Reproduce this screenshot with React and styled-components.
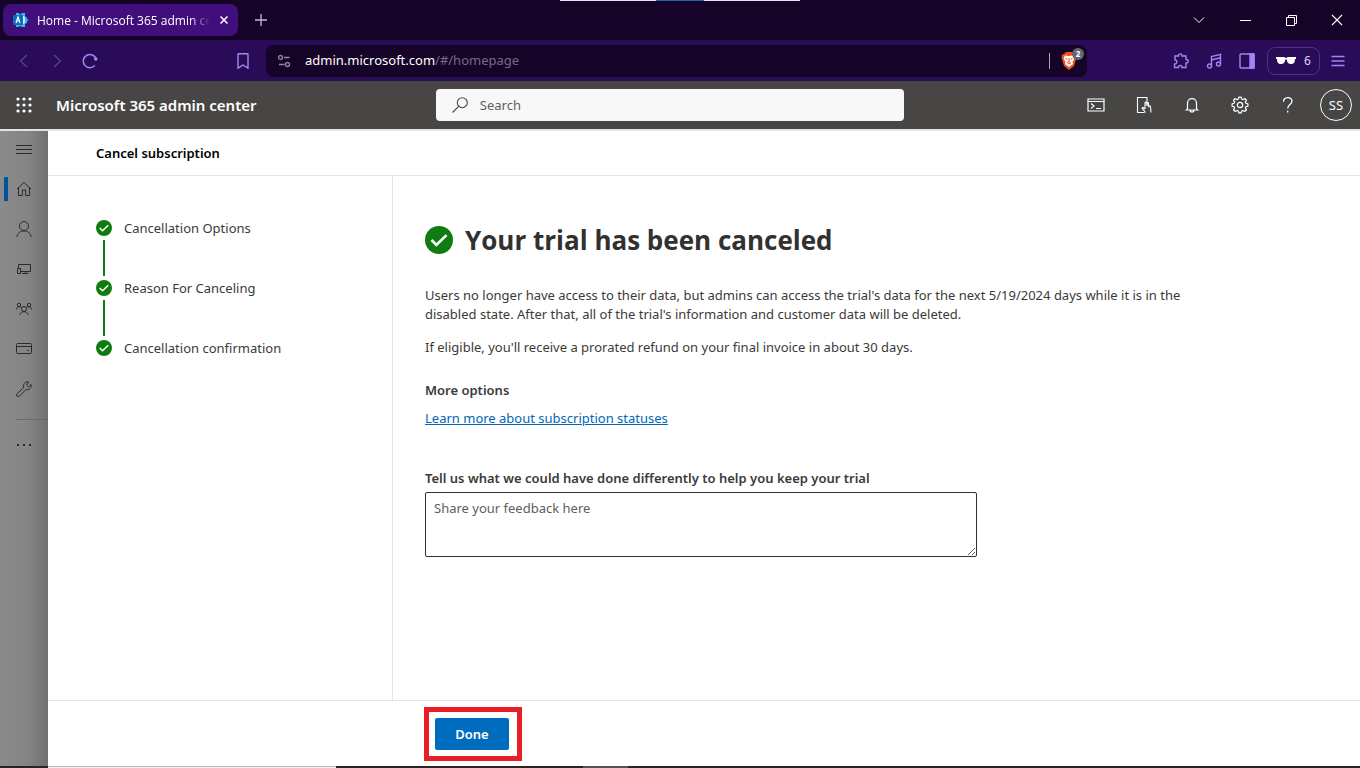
import React from "react";
import styled, { createGlobalStyle } from "styled-components";

const steps = [
  "Cancellation Options",
  "Reason For Canceling",
  "Cancellation confirmation",
];

// eight teeth, four points each, around the centre of a 18px box
const gearPoints = Array.from({ length: 32 }, (_, i) => {
  const tooth = Math.floor(i / 4) * 45;
  const angle = ((tooth + [-15, -9, 9, 15][i % 4]) * Math.PI) / 180;
  const radius = [6.2, 8, 8, 6.2][i % 4];
  return `${9 + radius * Math.sin(angle)},${9 - radius * Math.cos(angle)}`;
}).join(" ");

function Icon({ size = 16, box = 16, stroke = 1, children }) {
  return (
    <svg
      width={size}
      height={size}
      viewBox={`0 0 ${box} ${box}`}
      fill="none"
      stroke="currentColor"
      strokeWidth={stroke}
      aria-hidden="true"
    >
      {children}
    </svg>
  );
}

function Check({ size }) {
  return (
    <svg width={size} height={size} viewBox="0 0 16 16" aria-hidden="true">
      <circle cx="8" cy="8" r="8" fill="#107c10" />
      <path d="M3.700 8l2.800 2.800 5.800-5.600" fill="none" stroke="#fff" strokeWidth="1.5" />
    </svg>
  );
}

function Favicon() {
  return (
    <svg width="16" height="16" viewBox="0 0 16 16" aria-hidden="true">
      <path d="M3 1h3l1 2 2-2h3v3l1 1 1 1v1l2 1-2 1v2l-2 1v3h-3l-2-1-2 1H3v-2L1 12V5l2-1z" fill="#37b6e9" />
      <path d="M8 4h3l1 2v4l-1 2H8z" fill="#bff0fb" />
      <rect x="0" y="3" width="10" height="10" rx="1" fill="#0f6cbd" />
      <path d="M3 11l2-6 2 6M3.700 9h2.600" fill="none" stroke="#fff" strokeWidth="1.200" />
    </svg>
  );
}

function Shield() {
  return (
    <svg width="16" height="18" viewBox="0 0 16 18" aria-hidden="true">
      <path d="M5 0h6l2 2 2 .5.5 3L13 14l-5 4-5-4L.5 5.500l.5-3L3 2z" fill="#f1501b" />
      <path d="M4 3.500l4 .5 4-.5 1.500 3-2 3.500.5 2L8 15l-4-3 .5-2-2-3.500z" fill="#fff" />
      <path d="M4.500 6.500l2 .8M11.500 6.500l-2 .8M8 6v3.500l-1.700 1L8 12l1.700-1L8 9.500" fill="none" stroke="#f1501b" />
    </svg>
  );
}

function BrowserTabs() {
  return (
    <TabStrip>
      <ScreenMarker><i /></ScreenMarker>
      <Tab>
        <Favicon />
        <span>Home - Microsoft 365 admin center</span>
        <TabClose aria-label="Close tab">
          <Icon size={10} box={10} stroke={1.5}><path d="M1.500 1.500l7 7M8.500 1.500l-7 7" /></Icon>
        </TabClose>
      </Tab>
      <NewTab aria-label="New tab">
        <Icon size={14} box={14} stroke={1.3}><path d="M7 1v12M1 7h12" /></Icon>
      </NewTab>
      <WindowButtons>
        <button aria-label="Search tabs">
          <Icon size={12} box={12}><path d="M1 3.500l5 5 5-5" /></Icon>
        </button>
        <button aria-label="Minimize">
          <Icon size={11} box={11}><path d="M0 5.500h11" /></Icon>
        </button>
        <button aria-label="Restore">
          <Icon size={11} box={11}><path d="M.5 2.500h8v8h-8zM2.500 2.500v-2h8v8h-2" /></Icon>
        </button>
        <button aria-label="Close">
          <Icon size={12} box={12} stroke={1.1}><path d="M1 1l10 10M11 1L1 11" /></Icon>
        </button>
      </WindowButtons>
    </TabStrip>
  );
}

function AddressBar() {
  return (
    <Toolbar>
      <NavSide>
        <ToolButton $dim aria-label="Back">
          <Icon stroke={1.4}><path d="M11 2L4.500 8l6.500 6" /></Icon>
        </ToolButton>
        <ToolButton $dim aria-label="Forward">
          <Icon stroke={1.4}><path d="M5 2l6.500 6L5 14" /></Icon>
        </ToolButton>
        <ToolButton aria-label="Reload">
          <Icon stroke={1.5}>
            <path d="M12.800 12.500A6.600 6.600 0 1 1 14.200 6" />
            <circle cx="13.800" cy="6" r="1.800" fill="currentColor" stroke="none" />
          </Icon>
        </ToolButton>
        <ToolButton $end aria-label="Bookmark">
          <Icon stroke={1.4}><path d="M3 1.500q0-.7.700-.7h8.600q.7 0 .7.700v13.700L8 12l-5 3.200z" /></Icon>
        </ToolButton>
      </NavSide>
      <Url>
        <Icon size={14} box={14} stroke={1.3}>
          <circle cx="3.500" cy="3.500" r="2" /><path d="M7 3.500h5.500M2 10.500h5.500" /><circle cx="10.500" cy="10.500" r="2" />
        </Icon>
        <Address href="#/homepage">admin.microsoft.com<span>/#/homepage</span></Address>
        <Shields aria-label="Brave Shields">
          <Shield />
          <ShieldCount>2</ShieldCount>
        </Shields>
      </Url>
      <ExtensionSide>
        <ToolButton aria-label="Extensions">
          <Icon stroke={1.4}>
            <path d="M2 3h3.500C5 .2 9.500.2 9 3h4v3.500c3-.6 3 4 0 3.500v4.500H9c.5-2.800-4-2.800-3.500 0H1.500V11c3 .5 3-4.500.5-4z" />
          </Icon>
        </ToolButton>
        <ToolButton aria-label="Playlist">
          <Icon stroke={1.4}>
            <path d="M5.500 13V3.500l9-2.200V11M5.500 7l9-2.200" /><circle cx="3.500" cy="13" r="2" /><circle cx="12.500" cy="11" r="2" />
          </Icon>
        </ToolButton>
        <ToolButton aria-label="Sidebar">
          <Icon stroke={1.4}>
            <rect x="1" y="1" width="14" height="14" rx="1" /><path d="M11 1h4v14h-4z" fill="currentColor" />
          </Icon>
        </ToolButton>
        <Private>
          <svg width="20" height="9" viewBox="0 0 20 9" aria-hidden="true">
            <path d="M0 1h8l2 1 2-1h8v2h-1c0 3-1 5-4 5s-4-2-4.300-4.500h-1.400C9 6 8 8 5 8S1 6 1 3H0z" fill="#fff" />
          </svg>
          6
        </Private>
        <ToolButton aria-label="Menu">
          <Icon stroke={1.4}><path d="M1.500 3.500h13M1.500 8h13M1.500 12.500h13" /></Icon>
        </ToolButton>
      </ExtensionSide>
    </Toolbar>
  );
}

function AdminHeader() {
  return (
    <Header>
      <Brand>
        <HeaderButton aria-label="App launcher">
          <svg width="16" height="16" viewBox="0 0 16 16" fill="#fff" aria-hidden="true">
            {[2, 8, 14].map((y) =>
              [2, 8, 14].map((x) => <circle key={`${x}-${y}`} cx={x} cy={y} r="1.600" />)
            )}
          </svg>
        </HeaderButton>
        <h1>Microsoft 365 admin center</h1>
      </Brand>
      <SearchArea>
        <SearchBox>
          <Icon stroke={1.1}><circle cx="10.300" cy="5.700" r="5" /><path d="M6.700 9.300L.5 15.500" /></Icon>
          <input id="search" aria-label="Search" placeholder="Search" />
        </SearchBox>
      </SearchArea>
      <HeaderActions>
        <HeaderButton aria-label="Cloud Shell">
          <Icon size={18} box={18} stroke={1.2}>
            <path d="M1 3h16v12H1zM1 5.500h16M4 7.500l3 2.500-3 2.500M9 12.500h5" />
          </Icon>
        </HeaderButton>
        <HeaderButton aria-label="What's new">
          <Icon size={18} box={18} stroke={1.1}>
            <path d="M9.500 16.500h-7v-15h9.500v5" />
            <path d="M10.500 16.500L7 12.200l1-.7 2 1.500M10 13V6.500q1-1 1.300 0l.7 3.500.3-3q1-.8 1.200.2v3.300l1-.8q.9.200 1 1.300l.5 5.500" />
          </Icon>
        </HeaderButton>
        <HeaderButton aria-label="Notifications">
          <Icon stroke={1.2}>
            <path d="M3.500 11.500V6.200a4.500 4.500 0 0 1 9 0v5.300l1.200 1.500H2.300zM6 13q0 2 2 2t2-2" />
          </Icon>
        </HeaderButton>
        <HeaderButton aria-label="Settings">
          <Icon size={18} box={18} stroke={1.2}>
            <polygon points={gearPoints} strokeLinejoin="round" />
            <circle cx="9" cy="9" r="2.700" />
          </Icon>
        </HeaderButton>
        <HeaderButton aria-label="Help">
          <Icon stroke={1.3}>
            <path d="M3.500 4.800C3.500-.6 12-.6 12 4c0 3.500-4.300 3.500-4.300 7.500M7.700 13.800v1.700" />
          </Icon>
        </HeaderButton>
        <Account>SS</Account>
      </HeaderActions>
    </Header>
  );
}

function SideNav() {
  return (
    <Rail>
      <RailItem aria-label="Navigation menu">
        <Icon><path d="M0 4.500h16M0 8.500h16M0 12.500h16" /></Icon>
      </RailItem>
      <RailItem $active aria-label="Home">
        <Icon><path d="M1 8l7-6.500L15 8M2.500 7v7.500h3.800V9h3.400v5.500h3.800V7" /></Icon>
      </RailItem>
      <RailItem aria-label="Users">
        <Icon><circle cx="8" cy="5" r="4.500" /><path d="M1 16c0-8 14-8 14 0" /></Icon>
      </RailItem>
      <RailItem aria-label="Devices">
        <Icon>
          <path d="M2.500 7V3.500h12v7h-10M1.500 7.500h3v5h-3zM9.500 10.500v2.500M6 12.500h6.500" />
        </Icon>
      </RailItem>
      <RailItem aria-label="Teams & groups">
        <Icon>
          <circle cx="8" cy="8" r="2.500" /><circle cx="3" cy="4" r="1.700" /><circle cx="13" cy="4" r="1.700" />
          <path d="M4 14c0-4.500 8-4.500 8 0M.5 8.500C.5 5.500 4 4.800 5.500 7M15.500 8.500c0-3-3.500-3.700-5-1.500" />
        </Icon>
      </RailItem>
      <RailItem aria-label="Billing">
        <Icon><rect x=".5" y="2.500" width="15" height="10" rx="1" /><path d="M.5 5.500h15M11 9.500h2" /></Icon>
      </RailItem>
      <RailItem aria-label="Setup">
        <Icon>
          <path d="M12.500.8A4.300 4.300 0 0 0 7.700 6.500L1 12.800A1.700 1.700 0 0 0 3.500 15.200L9.800 8.600A4.300 4.300 0 0 0 15.200 3.500L12.300 5.800 10.600 4.200z" />
        </Icon>
      </RailItem>
      <RailDivider />
      <RailItem aria-label="Show all">
        <Icon>
          <g fill="currentColor" stroke="none">
            <path d="M1 7h2v2H1zM7 7h2v2H7zM13 7h2v2h-2z" />
          </g>
        </Icon>
      </RailItem>
    </Rail>
  );
}

export default function App() {
  return (
    <Page>
      <GlobalStyle />
      <BrowserTabs />
      <AddressBar />
      <AdminHeader />
      <Body>
        <SideNav />
        <Panel>
          <PanelHeader>Cancel subscription</PanelHeader>
          <PanelBody>
            <Steps>
              {steps.map((step) => (
                <Step key={step}>
                  <Check size={16} />
                  {step}
                </Step>
              ))}
            </Steps>
            <Content>
              <Title>
                <Check size={28} />
                Your trial has been canceled
              </Title>
              <p>
                Users no longer have access to their data, but admins can access the
                trial's data for the next 5/19/2024 days while it is in the disabled
                state. After that, all of the trial's information and customer data
                will be deleted.
              </p>
              <p>
                If eligible, you'll receive a prorated refund on your final invoice in
                about 30 days.
              </p>
              <h3>More options</h3>
              <a href="#statuses">Learn more about subscription statuses</a>
              <Feedback>
                <label htmlFor="feedback">
                  Tell us what we could have done differently to help you keep your trial
                </label>
                <textarea id="feedback" placeholder="Share your feedback here" />
              </Feedback>
            </Content>
          </PanelBody>
          <PanelFooter>
            <Highlight>
              <Done>Done</Done>
            </Highlight>
          </PanelFooter>
        </Panel>
      </Body>
      <Taskbar>
        <TaskbarLight />
        <TaskbarGrey />
      </Taskbar>
    </Page>
  );
}

const GlobalStyle = createGlobalStyle`
  * {
    box-sizing: border-box;
  }
  body {
    margin: 0;
    font-family: "Noto Sans", "Open Sans", sans-serif;
    font-size: 13px;
    line-height: 19px;
    color: #3b3a39;
  }
  button, input, textarea {
    font: inherit;
    color: inherit;
  }
  button {
    display: flex;
    align-items: center;
    justify-content: center;
    padding: 0;
    border: none;
    background: none;
    cursor: pointer;
  }
  svg {
    flex: none;
  }
`;

const Page = styled.div`
  display: flex;
  flex-direction: column;
  min-height: 100vh;
`;

const TabStrip = styled.div`
  position: relative;
  display: flex;
  align-items: center;
  height: 40px;
  padding-left: 3px;
  background: #150427;
  color: #fff;
  font-family: "Open Sans", sans-serif;
`;

const ScreenMarker = styled.div`
  position: absolute;
  top: 0;
  left: 560px;
  display: flex;
  justify-content: center;
  width: 240px;
  height: 1px;
  background: #e6e0ee;
  i {
    width: 48px;
    background: #1f64ad;
  }
`;

const Tab = styled.div`
  display: flex;
  align-items: center;
  gap: 8px;
  width: 235px;
  height: 32px;
  padding: 0 8px 0 10px;
  border-radius: 8px;
  background: #400f7c;
  font-size: 12px;
  span {
    flex: 1;
    overflow: hidden;
    white-space: nowrap;
    mask-image: linear-gradient(to right, #000 88%, transparent);
  }
`;

const TabClose = styled.button`
  width: 12px;
  height: 16px;
`;

const NewTab = styled.button`
  width: 46px;
  height: 32px;
  color: #c5b3e6;
`;

const WindowButtons = styled.div`
  display: flex;
  margin-left: auto;
  button {
    width: 46px;
    height: 40px;
  }
`;

const Toolbar = styled.div`
  display: flex;
  align-items: center;
  height: 41px;
  background: #290b57;
  color: #a684f5;
`;

const NavSide = styled.div`
  display: flex;
  flex: 0 0 266px;
  padding: 0 7px;
`;

const ToolButton = styled.button`
  width: 33px;
  height: 32px;
  margin-left: ${(props) => (props.$end ? "auto" : "0")};
  opacity: ${(props) => (props.$dim ? 0.4 : 1)};
`;

const Url = styled.div`
  display: flex;
  flex: 1;
  align-items: center;
  height: 32px;
  padding: 0 8px 0 11px;
  border-radius: 8px;
  background: #150427;
  color: #8f86a0;
`;

const Address = styled.a`
  flex: 1;
  margin-left: 14px;
  color: #fff;
  text-decoration: none;
  span {
    color: #766b88;
  }
`;

const Shields = styled.button`
  position: relative;
  width: 30px;
  height: 16px;
  padding-left: 9px;
  border-left: 1px solid #a9a1b8;
`;

const ShieldCount = styled.span`
  position: absolute;
  top: -5px;
  right: -5px;
  width: 12px;
  height: 12px;
  border-radius: 6px;
  background: #666573;
  color: #fff;
  font-size: 8px;
  line-height: 12px;
  font-weight: 700;
`;

const ExtensionSide = styled.div`
  display: flex;
  flex: 0 0 273px;
  align-items: center;
  justify-content: flex-end;
  padding-right: 6px;
`;

const Private = styled.button`
  gap: 8px;
  width: 53px;
  height: 28px;
  margin: 0 1px 0 4px;
  border: 1px solid #4d318a;
  border-radius: 8px;
  color: #dfd2ff;
  font-size: 12px;
`;

const Header = styled.header`
  display: flex;
  height: 48px;
  background: #484644;
  color: #fff;
`;

const Brand = styled.div`
  display: flex;
  align-items: center;
  h1 {
    margin: 0;
    padding: 0 11px 0 8px;
    font-size: 15px;
    line-height: 20px;
    font-weight: 600;
    white-space: nowrap;
  }
`;

const HeaderButton = styled.button`
  width: 48px;
  height: 48px;
`;

const SearchArea = styled.div`
  display: flex;
  flex: 1;
  align-items: center;
  justify-content: center;
`;

const SearchBox = styled.div`
  display: flex;
  align-items: center;
  gap: 12px;
  width: 468px;
  height: 32px;
  padding: 0 16px;
  border-radius: 4px;
  background: #f8f8f8;
  color: #484644;
  input {
    flex: 1;
    padding: 0;
    border: none;
    outline: none;
    background: none;
  }
  input::placeholder {
    color: #605e5c;
  }
`;

const HeaderActions = styled.div`
  display: flex;
  align-items: center;
`;

const Account = styled.button`
  width: 32px;
  height: 32px;
  margin: 0 8px;
  border: 1px solid #fff;
  border-radius: 16px;
`;

const Body = styled.div`
  display: flex;
  flex: 1;
  border-top: 2px solid #e3e3e3;
`;

const Rail = styled.nav`
  flex: 0 0 48px;
  background: linear-gradient(to right, #8b8b8b, #848484 60%, #707070);
  color: #2b2a2d;
`;

const RailItem = styled.button`
  width: 48px;
  height: 40px;
  padding: 0 4px 4px 0;
  border-left: 4px solid transparent;
  position: relative;
  &::before {
    content: "";
    display: ${(props) => (props.$active ? "block" : "none")};
    position: absolute;
    left: 0;
    top: 6px;
    width: 4px;
    height: 24px;
    background: #00529a;
  }
`;

const RailDivider = styled.div`
  height: 1px;
  margin: 8px 0 7px 16px;
  background: #6b6b6b;
`;

const Panel = styled.main`
  display: flex;
  flex: 1;
  flex-direction: column;
  background: #fff;
`;

const PanelHeader = styled.h2`
  margin: 0;
  padding: 13px 48px 12px;
  border-bottom: 1px solid #e5e5e5;
  color: #000;
  font-size: 13px;
  line-height: 19px;
  font-weight: 600;
`;

const PanelBody = styled.div`
  display: flex;
  flex: 1;
`;

const Steps = styled.ol`
  display: flex;
  flex: 0 0 345px;
  flex-direction: column;
  gap: 40px;
  margin: 0;
  padding: 42px 48px;
  border-right: 1px solid #e5e5e5;
  list-style: none;
`;

const Step = styled.li`
  position: relative;
  display: flex;
  align-items: center;
  gap: 12px;
  height: 20px;
  &:not(:last-child)::after {
    content: "";
    position: absolute;
    top: 22px;
    left: 7px;
    width: 2px;
    height: 36px;
    background: #107c10;
  }
`;

const Content = styled.section`
  flex: 1;
  padding: 44px 32px 0;
  p {
    max-width: 790px;
    margin: 0 0 14px;
  }
  h3 {
    margin: 24px 0 9px;
    font-size: 13px;
    line-height: 19px;
    font-weight: 600;
  }
  a {
    color: #0067b8;
  }
`;

const Title = styled.h1`
  display: flex;
  align-items: center;
  gap: 12px;
  margin: 0 0 26px;
  color: #323130;
  font-family: "Open Sans", sans-serif;
  font-size: 26px;
  line-height: 40px;
  font-weight: 700;
`;

const Feedback = styled.div`
  display: flex;
  flex-direction: column;
  gap: 4px;
  max-width: 552px;
  margin-top: 41px;
  label {
    font-weight: 600;
  }
  textarea {
    display: block;
    height: 65px;
    padding: 6px 8px;
    border: 1px solid #323130;
    border-radius: 2px;
    resize: vertical;
  }
  textarea::placeholder {
    color: #605e5c;
  }
`;

const PanelFooter = styled.footer`
  display: flex;
  padding: 6px 376px 5px;
  border-top: 1px solid #e5e5e5;
`;

const Highlight = styled.div`
  padding: 6px 8px 6px 6px;
  border: 5px solid #e81f27;
`;

const Done = styled.button`
  width: 74px;
  height: 32px;
  border-radius: 2px;
  background: #006cbe;
  color: #fff;
  font-weight: 600;
`;

const Taskbar = styled.div`
  display: flex;
  height: 2px;
  padding-left: 48px;
  background: #252525;
`;

const TaskbarLight = styled.div`
  width: 288px;
  border-top: 1px solid #bdbdbd;
  background: #f2f2f2;
`;

const TaskbarGrey = styled.div`
  width: 45px;
  margin-left: 247px;
  background: #555;
`;
